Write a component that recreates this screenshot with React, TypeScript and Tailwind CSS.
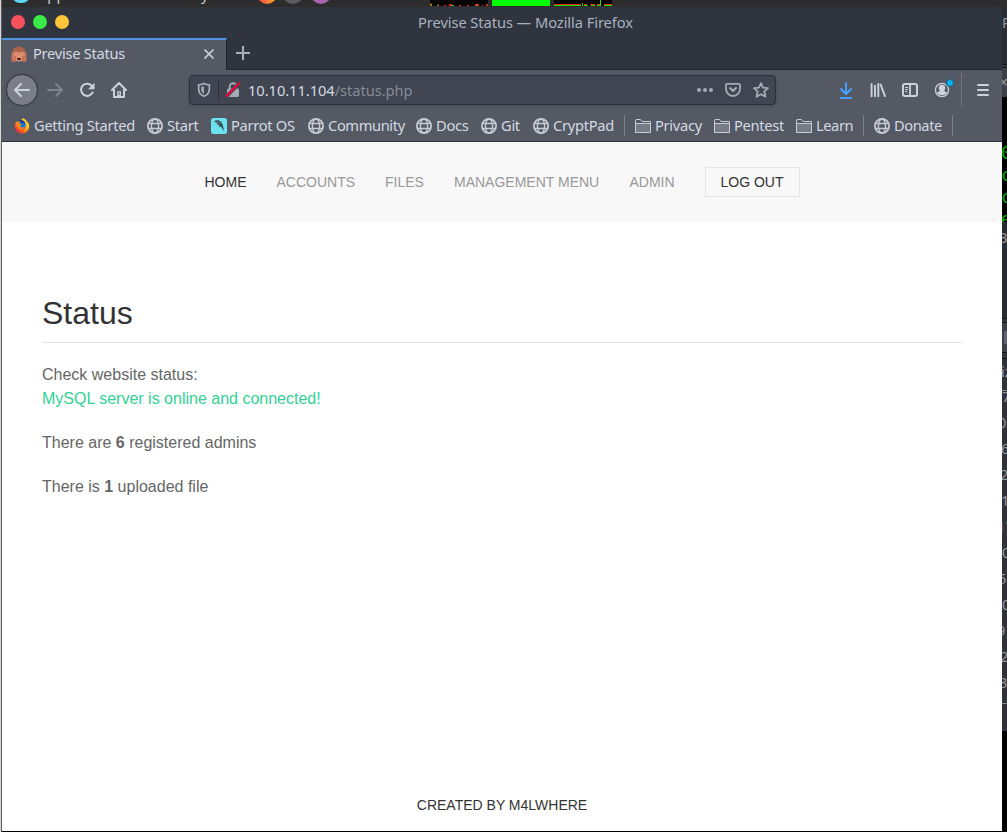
import React from "react";

const Globe = () => (
  <svg width="16" height="16" viewBox="0 0 16 16" fill="none" stroke="#c6cbd4" strokeWidth="1.5" className="shrink-0">
    <circle cx="8" cy="8" r="7.1" strokeWidth="1.8" />
    <ellipse cx="8" cy="8" rx="3.6" ry="7" strokeWidth="1.4" />
    <path d="M1.7 5.5h12.6M1.7 10.5h12.6" strokeWidth="1.4" />
  </svg>
);

const Folder = () => (
  <svg width="16" height="16" viewBox="0 0 16 16" fill="none" stroke="#c6cbd4" className="shrink-0">
    <path d="M.5 5.500h15v9H.5z" fill="#777b86" />
    <path d="M.5 14V2l.5-.5h4.500l1.500 2h8.500v11H.5z" />
  </svg>
);

const Firefox = () => (
  <svg width="16" height="16" viewBox="0 0 16 16" className="shrink-0">
    <defs>
      <linearGradient id="fox" x1="1" y1="0" x2=".1" y2="1">
        <stop offset="0" stopColor="#fff44f" />
        <stop offset=".35" stopColor="#ffc21a" />
        <stop offset=".65" stopColor="#ff6a1c" />
        <stop offset="1" stopColor="#f0104e" />
      </linearGradient>
    </defs>
    <path d="M9 .3c2 .8 2.800 1.700 3.300 2.800 1.600 1 3 3 2.900 5.500A7.100 7.100 0 0 1 8 15.600 7.200 7.200 0 0 1 .8 8.600C.8 6 1.600 4 2.600 2.900l.2 1.300 1.200-.6C6 3.300 7.200 2.400 9 .3z" fill="url(#fox)" />
    <circle cx="8" cy="7.500" r="3.700" fill="#1772d8" />
    <path d="M4 2.500c3.700-1.500 7 0 7.700 3.600-1.400-1.200-2.800-.9-4.300-1.500z" fill="#163b91" />
    <path d="M2.200 4.500l4 1.200 1.600.9-1.700 1.300c.2 1.400 2 2.200 5 .9-.9 2.600-4.600 3.400-6.900 1.200-1.500-1.400-2-3.300-2-5.500z" fill="#ff8a16" />
  </svg>
);

const Parrot = () => (
  <svg width="16" height="16" viewBox="0 0 16 16" className="shrink-0">
    <rect width="16" height="16" rx="2.500" fill="#6be1ef" />
    <path d="M2.800 3.200C5.500 1.800 8.500 2 10.300 4c1.700 2 1.800 5 3 9.500-1.800-2.400-2.500-4-3.900-5.500L8.800 10 7.800 7C6.500 6.600 5.900 6 5.300 4.700c-.9-.5-1.600-.4-2.500.1L4.300 3.600z" fill="#3d4d56" />
    <path d="M5.300 4.300l2.500 1M8 3.500l2 2" stroke="#6be1ef" strokeWidth=".5" />
  </svg>
);

const Monkey = () => (
  <svg width="16" height="16" viewBox="0 0 16 16" className="shrink-0">
    <path d="M2.500 2.500C4 1.600 6 1 7 1L8 0l1 1c1.500 0 3.500.6 4.500 1.500L14 5l1.300 2.500-1.500 5.500H2.200L.7 7.500 2 5z" fill="#ad624b" />
    <ellipse cx="8" cy="11" rx="4.300" ry="4.600" fill="#e39c80" />
    <path d="M.4 8C2 5 5 4.700 7.600 5.600V9L5.300 10.500 4.700 15.800H.6zM15.600 8C14 5 11 4.700 8.400 5.600V9l2.300 1.500.6 5.300h4.100z" fill="#c9745b" />
    <path d="M2.500 7.800l4.300-1M13.500 7.800l-4.300-1M3.700 9.600l3.300-1M12.300 9.600l-3.300-1" stroke="#edae93" strokeWidth="1" />
    <ellipse cx="8" cy="13" rx="2.100" ry="1.200" fill="#4a1f1a" />
  </svg>
);

const Back = () => (
  <svg width="16" height="16" viewBox="0 0 16 16" fill="none" stroke="#cdd1d9" strokeWidth="2" strokeLinecap="round" strokeLinejoin="round"><path d="M15 8H1M7 2L1 8l6 6" /></svg>
);
const Forward = () => (
  <svg width="16" height="16" viewBox="0 0 16 16" fill="none" stroke="#80848f" strokeWidth="1.900" strokeLinecap="round" strokeLinejoin="round"><path d="M1 8h14M9 2l6 6-6 6" /></svg>
);
const Reload = () => (
  <svg width="16" height="16" viewBox="0 0 16 16"><path d="M13.300 4.500A6.100 6.100 0 1 0 13.600 10.500" fill="none" stroke="#cdd1d9" strokeWidth="2" strokeLinecap="round" /><path d="M15.500.8v6.400H9z" fill="#cdd1d9" /></svg>
);
const Home = () => (
  <svg width="16" height="16" viewBox="0 0 16 16" fill="none" stroke="#cdd1d9" strokeWidth="2" strokeLinecap="round" strokeLinejoin="round"><path d="M1 8l7-7 7 7M3 8v7h10V8" /><path d="M6.800 13.500V9.800h2.500v3.700z" strokeWidth="1.300" /></svg>
);
const Shield = () => (
  <svg width="14" height="16" viewBox="0 0 14 16"><path d="M7 1.400C5.500 2.300 3.500 2.700 1.700 2.800v4.700c0 3.300 2 5.600 5.300 6.700 3.300-1.100 5.300-3.400 5.300-6.700V2.800C10.500 2.700 8.500 2.300 7 1.400z" fill="none" stroke="#a5aab3" strokeWidth="1.800" /><path d="M7 4.300v7.400c-1.700-.7-2.700-2-2.700-4V4.900z" fill="#a5aab3" /></svg>
);
const Lock = () => (
  <svg width="16" height="16" viewBox="0 0 16 16"><path d="M4.700 7V4.500a3.300 3.300 0 0 1 6.600 0V7" fill="none" stroke="#a5aab3" strokeWidth="1.900" /><rect x="2" y="6.500" width="12" height="8.500" rx="1.500" fill="#a5aab3" /><path d="M1.500 14.500L14 1.500" stroke="#404551" strokeWidth="3.400" /><path d="M1.500 14L14 1.300" stroke="#ff0039" strokeWidth="1.900" strokeLinecap="round" /></svg>
);
const Pocket = () => (
  <svg width="16" height="16" viewBox="0 0 16 16" fill="none" stroke="#a5aab3" strokeWidth="1.800" strokeLinecap="round" strokeLinejoin="round"><path d="M2 1.900h12a1 1 0 0 1 1 1V7A7 7 0 0 1 1 7V2.900a1 1 0 0 1 1-1z" /><path d="M5 6l3 3 3-3" strokeWidth="2.100" /></svg>
);
const Star = () => (
  <svg width="16" height="16" viewBox="0 0 16 16" fill="none" stroke="#a5aab3" strokeWidth="1.800" strokeLinejoin="round"><path d="M8 1.200l2 4.400 5 .6-3.700 3.300 1.200 5.200L8 12.200l-4.500 2.500 1.200-5.200L1 6.200l5-.6z" /></svg>
);
const Download = () => (
  <svg width="14" height="17" viewBox="0 0 14 17" fill="none" stroke="#45a1ff" strokeWidth="2" strokeLinecap="round" strokeLinejoin="round"><path d="M7 1v10.500M2 7l5 5 5-5M2 16h10" /></svg>
);
const Library = () => (
  <svg width="16" height="16" viewBox="0 0 16 16" stroke="#cdd1d9" strokeWidth="1.900" strokeLinecap="round" fill="none"><path d="M1.600 2v12.200M5 3.800v10.400M8.300 2v12.200M10.700 2.600l4.200 11.500" /></svg>
);
const Sidebar = () => (
  <svg width="16" height="16" viewBox="0 0 16 16" stroke="#cdd1d9" fill="none"><rect x="1" y="2" width="14" height="12" rx="2" strokeWidth="2" /><path d="M8 2v12" strokeWidth="1.800" /><path d="M3 5.500h3M3 7.500h3M3 9.500h2" /></svg>
);
const Account = () => (
  <svg width="20" height="20" viewBox="0 0 20 20"><circle cx="8" cy="12" r="6.600" fill="none" stroke="#cdd1d9" strokeWidth="1.300" /><circle cx="8" cy="10" r="3.200" fill="#cdd1d9" /><path d="M3 15c1.200-1.700 2.500-2.100 3.500-2.100h3c1 0 2.300.4 3.500 2.100-2.500 3-7.500 3-10 0z" fill="#cdd1d9" /><circle cx="16" cy="5" r="4" fill="#24627f" /><circle cx="16" cy="5" r="2.900" fill="#00b3f4" /></svg>
);

type Mark = { w: string; icon?: React.ReactNode; label?: string };
const marks: Mark[] = [
  { w: "w-[133px]", icon: <Firefox />, label: "Getting Started" },
  { w: "w-[64px]", icon: <Globe />, label: "Start" },
  { w: "w-[97px]", icon: <Parrot />, label: "Parrot OS" },
  { w: "w-[108px] tracking-[-0.38px]", icon: <Globe />, label: "Community" },
  { w: "w-[65px]", icon: <Globe />, label: "Docs" },
  { w: "w-[52px]", icon: <Globe />, label: "Git" },
  { w: "w-[91px]", icon: <Globe />, label: "CryptPad" },
  { w: "w-[11px]" },
  { w: "w-[79px]", icon: <Folder />, label: "Privacy" },
  { w: "w-[82px]", icon: <Folder />, label: "Pentest" },
  { w: "w-[67px] tracking-[-0.42px]", icon: <Folder />, label: "Learn" },
  { w: "w-[11px]" },
  { w: "w-[78px] tracking-[-0.42px]", icon: <Globe />, label: "Donate" },
  { w: "w-[11px]" },
];

const edgeDigits = [
  ["7", "ml-0"], ["0", "-ml-1"], ["6", "-ml-px"], ["2", "-ml-0.5"], ["1", "-ml-px"], ["17", "-ml-[5px]"],
  ["0", "ml-0"], ["5", "-ml-1"], ["0", "ml-0"], ["9", "-ml-[5px]"], ["2", "-ml-0.5"], ["3", "-ml-[3px]"],
];

function DesktopBar() {
  return (
    <div className="flex h-[7px] items-start overflow-hidden bg-[#2d2d2d] text-[14.67px] leading-none text-[#c5cdd8]">
      <div className="ml-2.5 -mt-[13px] h-4 w-[18px] shrink-0 rounded-full bg-[#5bd6f2]" />
      <div className="ml-[8px] -mt-[13px] w-[163px] shrink-0">Applications</div>
      <div className="-mt-[13px] w-[56px] shrink-0">y</div>
      <div className="-mt-[16px] h-5 w-5 shrink-0 rounded-full bg-linear-to-r from-[#f52e3f] to-[#ffb020]" />
      <div className="ml-[6px] -mt-[16px] h-5 w-5 shrink-0 rounded-full bg-[#5c5c5c]" />
      <div className="ml-2 -mt-[16px] h-5 w-5 shrink-0 rounded-full bg-[#a866b0]" />
      <svg width="182" height="6" className="ml-[99px] shrink-0" shapeRendering="crispEdges">
        <rect width="58" height="6" fill="#000" /><rect x="62" width="58" height="6" fill="#0f0" /><rect x="124" width="58" height="6" fill="#000" />
        <path d="M0 3h1v3H0zM8 4h1v2H8zM14 5h2v1h-2zM19 4h3v2h-3zM29 5h2v1h-2zM37 5h2v1h-2zM45 4h4v2h-4zM52 5h1v1h-1zM56 4h2v2h-2zM124 4h27v1h-27zM154 4h3v1h-3zM160 4h5v1h-5zM167 4h4v1h-4zM174 4h8v1h-8z" fill="#e22b18" />
        <path d="M1 4h1v2H1zM7 5h1v1H7zM22 5h2v1h-2zM46 5h1v1h-1zM124 5h27v1h-27zM152 3h1v3h-1zM154 5h4v1h-4zM161 5h4v1h-4zM167 5h3v1h-3zM170 0h1v6h-1zM174 5h8v1h-8z" fill="#1be000" />
      </svg>
    </div>
  );
}

function Toolbar() {
  return (
    <div className="flex h-10 items-center pl-[4px]">
      <div className="flex size-8 items-center justify-center rounded-full border border-[#373b44] bg-[#7b7e86] shadow-[0_0_1px_#30333b]"><Back /></div>
      <div className="ml-[9px]"><Forward /></div>
      <div className="ml-4"><Reload /></div>
      <div className="ml-4"><Home /></div>
      <div className="ml-[62px] flex h-[30px] w-[587px] items-center rounded-[4px] border border-[#2c303a] bg-[#404551] shadow-[0_1px_3px_#464b56]">
        <div className="ml-[7px]"><Shield /></div>
        <div className="ml-[7px] h-[22px] w-px bg-[#2c303a]" />
        <div className="ml-[6px]"><Lock /></div>
        <div className="ml-[7px] w-[449px] whitespace-pre tracking-[-0.05px] text-[#d3dae3]">10.10.11.104<span className="text-[#868c97]">/status.php</span></div>
        <svg width="16" height="4" viewBox="0 0 16 4" fill="#a5aab3"><circle cx="2" cy="2" r="2" /><circle cx="8" cy="2" r="2" /><circle cx="14" cy="2" r="2" /></svg>
        <div className="ml-3"><Pocket /></div>
        <div className="ml-3"><Star /></div>
      </div>
      <div className="ml-[63px]"><Download /></div>
      <div className="ml-[17px]"><Library /></div>
      <div className="ml-4"><Sidebar /></div>
      <div className="ml-4 -mt-1"><Account /></div>
      <div className="-ml-1 h-[34px] w-[12px] border-r border-[#737782]" />
      <div className="ml-[15px] flex h-3 w-3 flex-col justify-between"><i className="h-0.5 rounded bg-[#cdd1d9]" /><i className="h-0.5 rounded bg-[#cdd1d9]" /><i className="h-0.5 rounded bg-[#cdd1d9]" /></div>
    </div>
  );
}

function BackgroundEdge() {
  return (
    <div className="flex h-[825px] w-[5px] shrink-0 flex-col overflow-hidden whitespace-nowrap bg-black font-['Noto_Sans',sans-serif] text-[14.67px] text-[#91979f]">
      <div className="h-[57px] bg-[#292c34] pt-[4px] leading-[22px]">P</div>
      <div className="h-[4px] border-y border-[#15171d] bg-[#353841]" />
      <div className="h-[29px] bg-[#3d4049] text-[16px] leading-[29px]"><span className="-ml-[3px]">×</span></div>
      <div className="h-[125px] overflow-hidden bg-black pt-[45px] font-['DejaVu_Sans_Mono',monospace] text-[18px] leading-[22px] text-[#00a800]">
        {["0", "c", "c", "e"].map((g, i) => <div key={i} className="-ml-px h-[22px]">{g}</div>)}
      </div>
      <div className="h-[96px] bg-[#292c34] pt-1"><span className="-ml-[4px]">B</span></div>
      <div className="h-[5px] border-y border-[#15171d] bg-[#31343d]" />
      <div className="flex h-[29px] items-center bg-[#3d4049] pl-0.5"><div className="h-[13px] w-[3px] bg-[#626570]" /></div>
      <div className="h-[7px] border-y border-[#15171d] bg-[#31343d]" />
      <div className="h-[32px] border-b border-[#858991] bg-[#303139] leading-[24px]"><span className="-ml-px">iz</span></div>
      <div className="flex h-[340px] flex-col bg-[#303139]">
        <div className="-mt-[8px]">
          {edgeDigits.map(([d, m], i) => <div key={i} className="h-[26px] leading-[26px]"><span className={m}>{d}</span></div>)}
        </div>
        <div className="mt-[8px] h-px bg-[#858991]" />
      </div>
    </div>
  );
}

function Page() {
  return (
    <main className="flex flex-1 flex-col bg-white font-['Liberation_Sans',Arial,sans-serif] text-[16px] leading-6 text-[#666]">
      <nav className="flex h-20 items-center bg-[#f8f8f8] pl-[202.500px] text-[14px] text-[#999]">
        <span className="w-[72px] text-[#333]">HOME</span>
        <span className="w-[108.500px]">ACCOUNTS</span>
        <span className="w-[69px]">FILES</span>
        <span className="w-[175.500px] whitespace-nowrap">MANAGEMENT MENU</span>
        <span className="w-[75.500px]">ADMIN</span>
        <button className="h-[30px] w-[95px] whitespace-nowrap border border-[#e5e5e5] pr-px text-[14px] leading-[28px] text-[#333]">LOG OUT</button>
      </nav>
      <section className="flex-1 px-10 pt-[70px]">
        <h1 className="h-[51px] border-b border-[#e5e5e5] text-[32px] leading-[42px] text-[#333]">Status</h1>
        <p className="mt-[20px]">Check website status:<br /><span className="text-[#32d296]">MySQL server is online and connected!</span></p>
        <p className="mt-5">There are <b>6</b> registered admins</p>
        <p className="mt-5">There is <b>1</b> uploaded file</p>
      </section>
      <footer className="h-[38px] text-center text-[14px] leading-[24px] text-[#333]">CREATED BY M4LWHERE</footer>
    </main>
  );
}

export default function App() {
  return (
    <div className="h-[832px] w-[1007px] overflow-hidden bg-[#2d2d2d] font-['Noto_Sans',sans-serif] text-[14.67px]">
      <div className="flex h-full">
        <div className="w-0.5 shrink-0 border-r border-[#5a5b5d] bg-[#d6d6d6]" />
        <div className="flex w-[1005px] flex-col">
          <DesktopBar />
          <div className="flex h-[825px]">
            <div className="flex w-[1000px] shrink-0 flex-col border-b border-black">
              <header className="flex h-[31px] shrink-0 items-center rounded-t-[3px] bg-[#2f343f] pl-[9px]">
                <i className="-mt-px size-3.5 rounded-full bg-[#f9515b]" /><i className="-mt-px ml-2 size-3.5 rounded-full bg-[#3aea49]" /><i className="-mt-px ml-2 size-3.5 rounded-full bg-[#fdc537]" />
                <span className="ml-[349px] whitespace-nowrap pb-0.5 tracking-[-0.07px] text-[#a9b2bf]">Previse Status — Mozilla Firefox</span>
              </header>
              <div className="flex h-8 shrink-0 items-stretch bg-[#2f343f] text-[#d3dae3]">
                <div className="flex w-[225px] items-center border-r border-t-2 border-r-[#20242d] border-t-[#5294e2] bg-[#555964] pb-[3px] pl-[9px]">
                  <Monkey /><span className="ml-[6px] w-[171px] pb-0.5 tracking-[-0.27px]">Previse Status</span>
                  <svg width="10" height="10" viewBox="0 0 10 10" stroke="#c5cad3" strokeWidth="1.600"><path d="M.5.5l9 9M9.500.5l-9 9" /></svg>
                </div>
                <div className="flex flex-1 items-center border-b border-[#20242d] pb-px pl-[9px]">
                  <svg width="14" height="14" viewBox="0 0 14 14" stroke="#a9b0bb" strokeWidth="2"><path d="M7 0v14M0 7h14" /></svg>
                </div>
              </div>
              <div className="h-[72px] shrink-0 border-b border-[#2c303a] bg-[#555964]">
                <Toolbar />
                <div className="flex h-[31px] items-center pl-3 tracking-[-0.29px] text-[#d3dae3]">
                  {marks.map((m, i) => (
                    <div key={i} className={`${m.w} flex shrink-0 items-center gap-1 whitespace-nowrap`}>
                      {m.icon ?? <i className="h-[21px] w-px bg-[#7c818c]" />}
                      {m.label && <span className="pb-0.5">{m.label}</span>}
                    </div>
                  ))}
                </div>
              </div>
              <Page />
            </div>
            <BackgroundEdge />
          </div>
        </div>
      </div>
    </div>
  );
}
